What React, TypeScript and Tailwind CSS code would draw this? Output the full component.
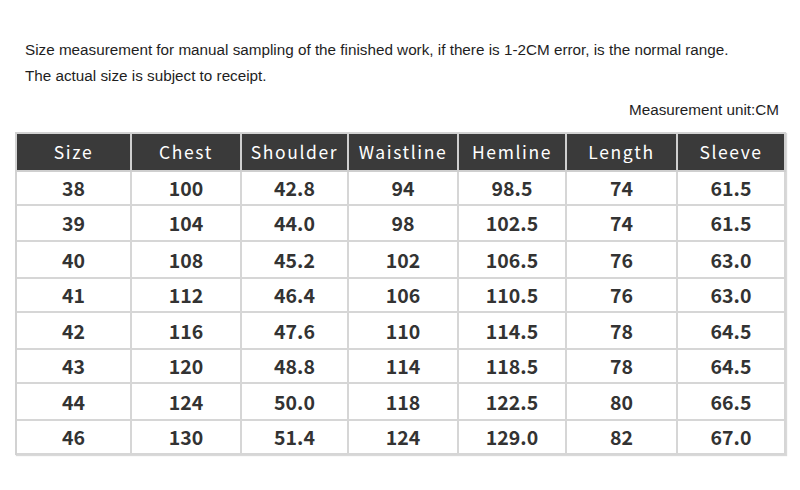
import React from "react";

const headers = ["Size", "Chest", "Shoulder", "Waistline", "Hemline", "Length", "Sleeve"];
const rows: string[][] = [
  ["38", "100", "42.8", "94", "98.5", "74", "61.5"],
  ["39", "104", "44.0", "98", "102.5", "74", "61.5"],
  ["40", "108", "45.2", "102", "106.5", "76", "63.0"],
  ["41", "112", "46.4", "106", "110.5", "76", "63.0"],
  ["42", "116", "47.6", "110", "114.5", "78", "64.5"],
  ["43", "120", "48.8", "114", "118.5", "78", "64.5"],
  ["44", "124", "50.0", "118", "122.5", "80", "66.5"],
  ["46", "130", "51.4", "124", "129.0", "82", "67.0"],
];
const rowH = ["h-[34px]", "h-[36px]", "h-[37px]", "h-[34px]", "h-[37px]", "h-[34px]", "h-[37px]", "h-[34px]"];

export default function App() {
  return (
    <div className="w-[800px] h-[490px] bg-white overflow-hidden relative">
      <div
        className="pt-[37px] pl-[25px] text-[15.25px] leading-[26px] text-[#1e1e1e]"
        style={{ fontFamily: '"Liberation Sans", Arial, sans-serif' }}
      >
        <div>Size measurement for manual sampling of the finished work, if there is 1-2CM error, is the normal range.</div>
        <div>The actual size is subject to receipt.</div>
      </div>
      <div
        className="mt-[11px] pr-[21px] text-right text-[15.25px] leading-[20px] text-[#1e1e1e]"
        style={{ fontFamily: '"Liberation Sans", Arial, sans-serif' }}
      >
        Measurement unit:CM
      </div>
      <div className="ml-[15px] mt-[12px] w-[771px] border-l-2 border-t-2 border-[#d2d2d2] shadow-[1px_1px_1px_rgba(0,0,0,0.15)]"
        style={{ fontFamily: '"Noto Sans CJK SC", "Noto Sans", sans-serif' }}
      >
        <div className="grid grid-cols-[115px_110px_107px_110px_108px_111px_108px] h-[38px] bg-[#3a3a3a]">
          {headers.map((h) => (
            <div key={h} className="flex items-center justify-center border-r-2 border-b-2 border-[#cfcfcf] text-white text-[17.5px] tracking-[1.6px] font-normal">
              {h}
            </div>
          ))}
        </div>
        {rows.map((r, i) => (
          <div key={i} className={`grid grid-cols-[115px_110px_107px_110px_108px_111px_108px] ${rowH[i]}`}>
            {r.map((c, j) => (
              <div key={j} className="flex items-center justify-center border-r-2 border-b-2 border-[#d6d6d6] text-[#333] text-[19.5px] font-semibold">
                {c}
              </div>
            ))}
          </div>
        ))}
      </div>
    </div>
  );
}
